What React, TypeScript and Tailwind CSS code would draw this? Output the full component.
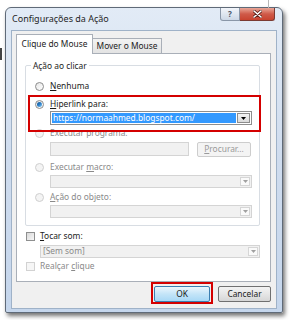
import React from "react";

const font = { fontFamily: '"Noto Sans", "Open Sans", sans-serif' };

function Radio({ checked, disabled }: { checked?: boolean; disabled?: boolean }) {
  return (
    <div
      className={
        "w-[9px] h-[9px] rounded-full border flex items-center justify-center shrink-0 " +
        (disabled
          ? "border-[#cfcfcf] bg-[#f4f4f4]"
          : "border-[#8c8c8c] bg-gradient-to-br from-[#e6e6e6] to-[#ffffff]")
      }
    >
      {checked && (
        <div className="w-[5px] h-[5px] rounded-full bg-gradient-to-br from-[#0d4f8f] via-[#2a7fc8] to-[#8fd0f5]" />
      )}
    </div>
  );
}

function Checkbox({ disabled }: { disabled?: boolean }) {
  return (
    <div
      className={
        "w-[9px] h-[9px] border shrink-0 " +
        (disabled
          ? "border-[#d2d2d2] bg-[#f6f6f6]"
          : "border-[#8e8f8f] bg-gradient-to-br from-[#d9d9d9] to-[#f7f7f7]")
      }
    />
  );
}

function Arrow({ dark }: { dark?: boolean }) {
  return (
    <svg width="5" height="3" viewBox="0 0 5 3">
      <path d="M0 0 H5 L2.5 3 Z" fill={dark ? "#000" : "#a0a0a0"} />
    </svg>
  );
}

function DisabledCombo({ w, h, text }: { w: string; h: string; text?: string }) {
  return (
    <div className={`${w} ${h} border border-[#d4d4d4] bg-[#f1f1f1] flex items-center justify-between pl-[2px] pr-[1px]`}>
      <span className="text-[#8a8a8a] leading-none">{text}</span>
      <div className="w-[10px] h-[9px] border border-[#d6d6d6] bg-[#fafafa] flex items-center justify-center">
        <Arrow />
      </div>
    </div>
  );
}

export default function App() {
  return (
    <div className="w-[292px] h-[320px] bg-white overflow-hidden relative text-[8.4px] text-[#1b1b1b]" style={font}>
      {/* background bits */}
      <div className="absolute left-[268px] top-0 w-[1px] h-[8px] bg-[#b8b8b8]" />
      <div className="absolute left-0 top-[48px] w-[2px] h-[12px] bg-[#444]" />

      <div className="pt-[7px] pl-[5px]">
        <div className="w-[278px] h-[306px] rounded-t-[6px] rounded-b-[2px] border border-[#5f6a78] bg-gradient-to-b from-[#e2ebf6] via-[#cfdcee] to-[#c5d6ec] shadow-[2px_3px_4px_rgba(0,0,0,0.55)] flex flex-col">
          {/* title bar */}
          <div className="h-[22px] flex items-start justify-between pl-[6px] pr-[7px]">
            <div className="pt-[4px] text-[9px] text-[#1e1e1e]">Configurações da Ação</div>
            <div className="flex">
              <div className="w-[20px] h-[13px] rounded-bl-[3px] border border-t-0 border-[#8a97a8] bg-gradient-to-b from-[#f2f5fa] to-[#cdd8e6] flex items-center justify-center text-[8px] leading-none text-[#4a5566] font-bold">
                ?
              </div>
              <div className="w-[35px] h-[13px] rounded-br-[3px] border border-t-0 border-l-0 border-[#7a3a32] bg-gradient-to-b from-[#e8a698] via-[#cf5a49] to-[#c8432f] flex items-center justify-center">
                <svg width="9" height="8" viewBox="0 0 9 8">
                  <path d="M1 1 L8 7 M8 1 L1 7" stroke="#5a2018" strokeWidth="3" strokeLinecap="round" />
                  <path d="M1 1 L8 7 M8 1 L1 7" stroke="#ffffff" strokeWidth="1.6" strokeLinecap="round" />
                </svg>
              </div>
            </div>
          </div>

          {/* client */}
          <div className="mx-[5px] h-[279px] border border-[#9fb2c8] bg-[#f0f0f0] pl-[4px] pt-[3px]">
            {/* tabs */}
            <div className="flex items-end h-[20px] relative z-10">
              <div className="w-[77px] h-[20px] bg-white border border-b-0 border-[#a9afb8] flex items-center justify-center pb-[1px]">
                Clique do Mouse
              </div>
              <div className="w-[69px] h-[15px] border border-l-0 border-b-0 border-[#a9afb8] bg-gradient-to-b from-[#f3f3f3] to-[#e3e3e3] flex items-center justify-center mb-[1px]">
                Mover o Mouse
              </div>
            </div>
            {/* panel */}
            <div className="w-[255px] h-[229px] -mt-[1px] border border-[#a9afb8] bg-white pt-[11px] pl-[8px]">
              {/* group box */}
              <div className="w-[235px] h-[161px] border border-[#d8dde3] rounded-[2px] relative pl-[9px] pt-[13px]">
                <span className="absolute -top-[6px] left-[5px] bg-white px-[2px] leading-[11px]">Ação ao clicar</span>
                <div className="h-[14px] flex items-center gap-[6px]">
                  <Radio />
                  <span><u>N</u>enhuma</span>
                </div>
                <div className="h-[14px] mt-[4px] flex items-center gap-[6px]">
                  <Radio checked />
                  <span><u>H</u>iperlink para:</span>
                </div>
                <div className="ml-[15px] w-[202px] h-[14px] border border-[#8e8e8e] bg-white flex items-center p-[1px]">
                  <div className="flex-1 h-full bg-[#3399ff] text-white flex items-center px-[1px] leading-none">
                    https://normaahmed.blogspot.com/
                  </div>
                  <div className="w-[13px] h-full border border-[#8c8c8c] ml-[1px] bg-gradient-to-b from-[#f4f4f4] to-[#dadada] flex items-center justify-center">
                    <Arrow dark />
                  </div>
                </div>
                <div className="h-[14px] mt-[1px] flex items-center gap-[6px] text-[#8a8a8a]">
                  <Radio disabled />
                  <span>Executar programa:</span>
                </div>
                <div className="ml-[15px] mt-[2px] flex gap-[8px]">
                  <div className="w-[139px] h-[14px] border border-[#d4d4d4] bg-[#f1f1f1]" />
                  <div className="w-[54px] h-[15px] border border-[#cdcdcd] rounded-[2px] bg-[#f4f4f4] text-[#9a9a9a] flex items-center justify-center">
                    <span><u>P</u>rocurar...</span>
                  </div>
                </div>
                <div className="h-[14px] mt-[3px] flex items-center gap-[6px] text-[#8a8a8a]">
                  <Radio disabled />
                  <span>Executar <u>m</u>acro:</span>
                </div>
                <div className="ml-[15px] mt-[1px]">
                  <DisabledCombo w="w-[202px]" h="h-[13px]" />
                </div>
                <div className="h-[14px] mt-[2px] flex items-center gap-[6px] text-[#8a8a8a]">
                  <Radio disabled />
                  <span><u>A</u>ção do objeto:</span>
                </div>
                <div className="ml-[15px] mt-[1px]">
                  <DisabledCombo w="w-[202px]" h="h-[13px]" />
                </div>

                {/* red annotation */}
                <div className="absolute left-[2px] top-[29px] w-[233px] h-[37px] border-2 border-[#d40000]" />
              </div>

              <div className="h-[14px] mt-[3px] ml-[1px] flex items-center gap-[5px]">
                <Checkbox />
                <span><u>T</u>ocar som:</span>
              </div>
              <div className="ml-[15px] mt-[2px]">
                <DisabledCombo w="w-[220px]" h="h-[13px]" text="[Sem som]" />
              </div>
              <div className="h-[14px] mt-[1px] ml-[1px] flex items-center gap-[5px] text-[#8a8a8a]">
                <Checkbox disabled />
                <span>Realçar <u>c</u>lique</span>
              </div>
            </div>

            {/* buttons */}
            <div className="flex justify-end gap-[8px] pr-[5px] mt-[4px]">
              <div className="relative">
                <div className="w-[56px] h-[16px] rounded-[2px] border border-[#3c7fb1] bg-gradient-to-b from-[#ecf6fd] via-[#c4e5f8] to-[#a8d8f6] flex items-center justify-center">
                  OK
                </div>
                <div className="absolute -left-[3px] -top-[4px] w-[62px] h-[22px] border-2 border-[#d40000]" />
              </div>
              <div className="w-[53px] h-[16px] rounded-[2px] border border-[#707070] bg-gradient-to-b from-[#f3f3f3] via-[#e6e6e6] to-[#d6d6d6] flex items-center justify-center">
                Cancelar
              </div>
            </div>
          </div>
        </div>
      </div>
    </div>
  );
}
